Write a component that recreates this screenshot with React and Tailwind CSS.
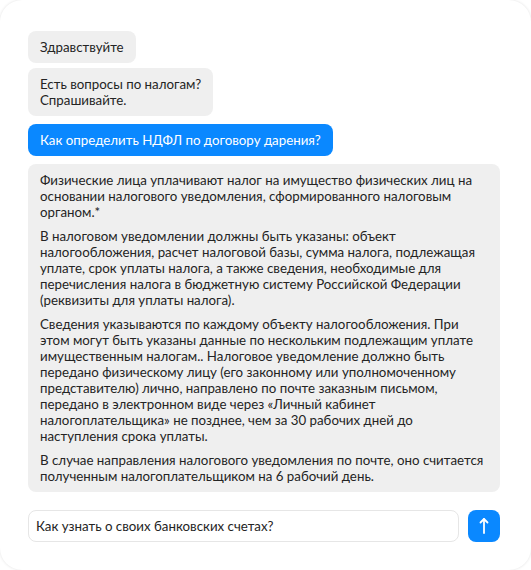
export default function App() {
  const font = { fontFamily: "Lato, 'Noto Sans', sans-serif" };
  return (
    <div className="w-[531px] h-[570px] bg-white overflow-hidden">
      <div
        className="w-[531px] h-[570px] bg-white rounded-[22px] shadow-[0_0_3px_rgba(0,0,0,0.12)] pt-[31px] pl-[28px] pr-[31px] text-[13.3px] leading-[16px] text-[#242424]"
        style={font}
      >
        <div className="flex flex-col items-start">
          <div className="bg-[#efefef] rounded-lg px-3 py-2">Здравствуйте</div>
          <div className="bg-[#efefef] rounded-lg px-3 py-2 mt-[5px]">
            Есть вопросы по налогам?
            <br />
            Спрашивайте.
          </div>
          <div className="bg-[#0a88ff] text-white rounded-lg px-3 py-2 mt-[8px]">
            Как определить НДФЛ по договору дарения?
          </div>
          <div className="bg-[#efefef] rounded-lg pl-3 pr-3 py-2 mt-[8px] w-full flex flex-col gap-2">
            <p>
              Физические лица уплачивают налог на имущество физических лиц на основании налогового уведомления, сформированного налоговым органом.*
            </p>
            <p>
              В налоговом уведомлении должны быть указаны: объект налогообложения, расчет налоговой базы, сумма налога, подлежащая уплате, срок уплаты налога, а также сведения, необходимые для перечисления налога в бюджетную систему Российской Федерации (реквизиты для уплаты налога).
            </p>
            <p>
              Сведения указываются по каждому объекту налогообложения. При этом могут быть указаны данные по нескольким подлежащим уплате имущественным налогам.. Налоговое уведомление должно быть передано физическому лицу (его законному или уполномоченному представителю) лично, направлено по почте заказным письмом, передано в электронном виде через «Личный кабинет налогоплательщика» не позднее, чем за 30 рабочих дней до наступления срока уплаты.
            </p>
            <p>
              В случае направления налогового уведомления по почте, оно считается полученным налогоплательщиком на 6 рабочий день.
            </p>
          </div>
          <div className="w-full flex items-center gap-[9px] mt-[18px]">
            <div className="flex-1 h-[32px] border border-[#e6e6e6] rounded-lg pl-[7px] flex items-center">
              Как узнать о своих банковских счетах?
            </div>
            <button className="w-[32px] h-[32px] rounded-lg bg-[#0a88ff] flex items-center justify-center">
              <svg width="14" height="18" viewBox="0 0 14 18" fill="none" stroke="white" strokeWidth="1.8" strokeLinecap="round" strokeLinejoin="round">
                <path d="M7 16V2" />
                <path d="M3.5 5.5L7 2l3.5 3.5" />
              </svg>
            </button>
          </div>
        </div>
      </div>
    </div>
  );
}
